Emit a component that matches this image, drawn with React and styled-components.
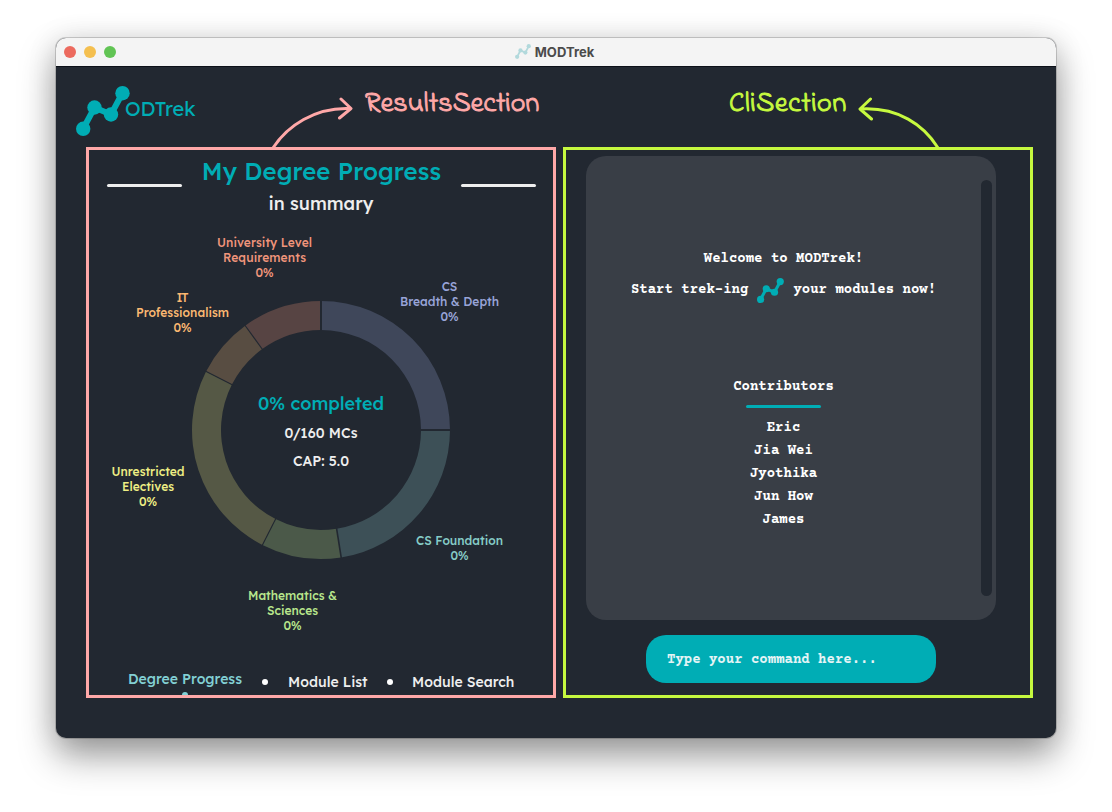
import React from "react";
import styled, { createGlobalStyle } from "styled-components";

const c = {
  ink: "#222831",
  panel: "#393e46",
  teal: "#00adb5",
  light: "#eeeeee",
  pink: "#ffa8a8",
  lime: "#c6f93f",
};

const GlobalStyle = createGlobalStyle`
  * { box-sizing: border-box; }
  body {
    margin: 0;
    background: #fff;
    font-family: Lexend, "Lexend Deca", Inter, "Liberation Sans", sans-serif;
    overflow: hidden;
  }
`;

const Page = styled.div`
  width: 1112px;
  height: 812px;
  padding: 38px 56px 74px;
`;

const Window = styled.div`
  width: 1000px;
  height: 700px;
  border-radius: 10px;
  background: ${c.ink};
  box-shadow: 0 0 0 1px rgba(0, 0, 0, 0.17), 0 18px 36px rgba(0, 0, 0, 0.38),
    0 2px 30px rgba(0, 0, 0, 0.12);
`;

const TitleBar = styled.div`
  height: 29px;
  padding: 0 8px;
  border-radius: 10px 10px 0 0;
  border-bottom: 1px solid #0c1018;
  background: #f4f4f4;
  display: grid;
  grid-template-columns: 100px 1fr 100px;
  align-items: center;
`;

const Lights = styled.div`
  display: flex;
  gap: 8px;
`;

const Light = styled.span`
  width: 12px;
  height: 12px;
  border-radius: 50%;
  background: ${(p) => p.$color};
`;

const WindowTitle = styled.div`
  display: flex;
  justify-content: center;
  align-items: center;
  gap: 4px;
  padding: 0 3px 1px 0;
  font-family: Inter, "Liberation Sans", sans-serif;
  font-size: 13px;
  line-height: 16px;
  font-weight: 700;
  letter-spacing: 0.05px;
  color: #4b4b4b;
`;

const Header = styled.header`
  height: 80px;
  padding-left: 20px;
  display: flex;
  align-items: flex-start;
`;

const LogoMark = styled.svg`
  flex: none;
  margin-top: ${(p) => p.$top || 0}px;
`;

const Wordmark = styled.div`
  flex: none;
  width: 146px;
  margin: 30px 0 0 -5px;
  font-size: 20px;
  line-height: 24px;
  letter-spacing: ${(p) => p.$spacing}px;
  color: ${c.teal};
`;

const Arrow = styled.svg`
  flex: none;
  margin-top: 28px;
  fill: none;
  stroke: ${(p) => p.$color};
  stroke-width: 3;
  stroke-linecap: round;
  stroke-linejoin: round;
`;

const Callout = styled.div`
  flex: none;
  width: ${(p) => p.$width}px;
  margin: 21px 0 0 ${(p) => p.$left}px;
  font-family: "Indie Flower", "Gloria Hallelujah", "Comic Neue", "Patrick Hand", Lato, sans-serif;
  font-size: 28px;
  line-height: 34px;
  letter-spacing: ${(p) => p.$spacing}px;
  white-space: nowrap;
  -webkit-text-stroke: 1px ${(p) => p.$color};
  color: ${(p) => p.$color};
`;

const Sections = styled.main`
  display: flex;
  gap: 7px;
  padding-left: 30px;
`;

const Section = styled.section`
  width: 470px;
  height: 551px;
  border: 3px solid ${(p) => p.$color};
  overflow: hidden;
  display: flex;
  flex-direction: column;
`;

const TitleRow = styled.div`
  display: flex;
  justify-content: space-between;
  align-items: flex-start;
  height: 40px;
  padding: 5px 17px 0 18px;
`;

const Rule = styled.span`
  display: block;
  width: 75px;
  height: 3px;
  border-radius: 2px;
  background: ${(p) => p.$color || c.light};
  margin-top: ${(p) => p.$top || 0}px;
`;

const Title = styled.h1`
  margin: 0;
  font-size: 24px;
  line-height: 33px;
  font-weight: 500;
  letter-spacing: 0.1px;
  white-space: nowrap;
  color: ${c.teal};
`;

const Subtitle = styled.h2`
  margin: 0;
  height: 35px;
  text-align: center;
  font-size: 18px;
  line-height: 28px;
  font-weight: 500;
  letter-spacing: 0;
  color: ${c.light};
`;

const Chart = styled.svg`
  display: block;
  flex: none;
  font-weight: 500;
  text-anchor: middle;
`;

const Nav = styled.nav`
  display: flex;
  align-items: flex-start;
  padding: 12px 0 0 39px;
  white-space: nowrap;
`;

const NavItem = styled.div`
  position: relative;
  width: ${(p) => p.$width}px;
  margin-top: ${(p) => (p.$active ? 0 : 3)}px;
  font-size: 14px;
  line-height: 20px;
  font-weight: 500;
  letter-spacing: ${(p) => p.$spacing}px;
  color: ${(p) => (p.$active ? "#82d0d4" : c.light)};
`;

const Dot = styled.span`
  width: 6px;
  height: 6px;
  border-radius: 50%;
  background: #fff;
  margin: 10px ${(p) => p.$right}px 0 ${(p) => p.$left}px;
`;

const ActiveDot = styled.span`
  position: absolute;
  left: 54px;
  top: 23px;
  width: 6px;
  height: 6px;
  border-radius: 50%;
  background: #82d0d4;
`;

const Console = styled.div`
  width: 410px;
  height: 464px;
  margin: 6px 0 0 20px;
  padding: 24px 4px 24px 0;
  border-radius: 20px;
  background: ${c.panel};
  display: flex;
  font-family: "Courier Prime", "Liberation Mono", monospace;
  font-size: 14px;
  font-weight: 700;
  color: #fff;
`;

const Output = styled.div`
  width: 395px;
  padding-top: 66px;
  display: flex;
  flex-direction: column;
  align-items: center;
`;

const Line = styled.div`
  height: ${(p) => p.$height || 23}px;
  display: flex;
  align-items: center;
  white-space: pre;
  gap: 9px;
`;

const Credits = styled.div`
  margin-top: 70px;
  display: flex;
  flex-direction: column;
  align-items: center;
`;

const ScrollTrack = styled.div`
  width: 11px;
  border-radius: 6px;
  background: ${c.ink};
`;

const CommandBox = styled.div`
  width: 290px;
  height: 48px;
  margin: 15px 0 0 80px;
  padding-left: 21px;
  border-radius: 20px;
  background: ${c.teal};
  color: #e4f4f5;
  font-family: "Courier Prime", "Liberation Mono", monospace;
  font-size: 14px;
  font-weight: 700;
  line-height: 51px;
`;

function Trek({ width, height, top, color = c.teal }) {
  return (
    <LogoMark width={width} height={height} $top={top} viewBox="0 0 54 50" fill={color} stroke={color}>
      <path d="M7 43 18.5 21.5 35 28.5 46.5 7" fill="none" strokeWidth="6" />
      <g stroke="none">
        <circle cx="7.2" cy="42.8" r="7.2" />
        <circle cx="18.5" cy="21.5" r="7.2" />
        <circle cx="35" cy="28.5" r="7.2" />
        <circle cx="46.5" cy="7.2" r="7.2" />
      </g>
    </LogoMark>
  );
}

const CX = 232;
const CY = 205;

const segments = [
  { from: 0, to: 90, fill: "#3f475a" },
  { from: 90, to: 171, fill: "#3d5057" },
  { from: 171, to: 207, fill: "#4b5949" },
  { from: 207, to: 297, fill: "#555845" },
  { from: 297, to: 324, fill: "#584d42" },
  { from: 324, to: 360, fill: "#574443" },
];

const dividers = [
  { at: 0, width: 2 },
  { at: 90, width: 2 },
  { at: 171, width: 1.6 },
  { at: 207, width: 1.1 },
  { at: 297, width: 1.1 },
  { at: 324, width: 1.1 },
];

const labels = [
  { x: 175.5, y: 21.5, color: "#f0957b", lines: [["University Level", 95], ["Requirements", 83], ["0%", 18]] },
  { x: 360.5, y: 66, color: "#98a4d8", lines: [["CS", 15.5], ["Breadth & Depth", 99], ["0%", 18]] },
  { x: 93.5, y: 76.5, color: "#fbb871", lines: [["IT", 12], ["Professionalism", 93], ["0%", 18]] },
  { x: 59, y: 250.5, color: "#eeee84", lines: [["Unrestricted", 73], ["Electives", 52], ["0%", 18]] },
  { x: 370.5, y: 320, color: "#86ccc7", lines: [["CS Foundation", 87], ["0%", 18]] },
  { x: 203.5, y: 374.5, color: "#b8e68c", lines: [["Mathematics &", 89], ["Sciences", 51], ["0%", 18]] },
];

const polar = (deg, r) => {
  const a = ((deg - 90) * Math.PI) / 180;
  return `${(CX + r * Math.cos(a)).toFixed(2)} ${(CY + r * Math.sin(a)).toFixed(2)}`;
};

const ring = (from, to, outer = 129, inner = 100) =>
  `M${polar(from, outer)}A${outer} ${outer} 0 0 1 ${polar(to, outer)}L${polar(to, inner)}A${inner} ${inner} 0 0 0 ${polar(from, inner)}Z`;

function DegreeChart() {
  return (
    <Chart width="464" height="432" viewBox="0 0 464 432">
      {segments.map((s) => (
        <path key={s.from} d={ring(s.from, s.to)} fill={s.fill} />
      ))}
      {dividers.map((d) => (
        <path key={d.at} d={`M${polar(d.at, 98)}L${polar(d.at, 131)}`} stroke={c.ink} strokeWidth={d.width} />
      ))}
      {labels.map((l) => (
        <g key={l.lines[0][0]} fill={l.color} fontSize="12">
          {l.lines.map(([text, width], i) => (
            <text key={text} x={l.x} y={l.y + i * 15} textLength={width}>
              {text}
            </text>
          ))}
        </g>
      ))}
      <text x="232" y="185" fontSize="18" fill={c.teal} textLength="126">0% completed</text>
      <text x="232" y="213" fontSize="14" fill={c.light} textLength="73">0/160 MCs</text>
      <text x="232" y="240.5" fontSize="14" fill={c.light} textLength="56">CAP: 5.0</text>
    </Chart>
  );
}

const contributors = ["Eric", "Jia Wei", "Jyothika", "Jun How", "James"];

export default function App() {
  return (
    <Page>
      <GlobalStyle />
      <Window>
        <TitleBar>
          <Lights>
            <Light $color="#ec6a5e" />
            <Light $color="#f4bf4f" />
            <Light $color="#61c454" />
          </Lights>
          <WindowTitle>
            <Trek width={16} height={15} color="#b2d9dc" />
            MODTrek
          </WindowTitle>
        </TitleBar>
        <Header>
          <Trek width={54} height={50} top={19} />
          <Wordmark $spacing={-0.1}>ODTrek</Wordmark>
          <Arrow $color={c.pink} width="84" height="52" viewBox="0 0 84 52">
            <path d="M2 53C16 31 44 12 79 13.5M70 4 80 13.5 68.5 23" />
          </Arrow>
          <Callout $color={c.pink} $width={176} $left={10} $spacing={0.15}>ResultsSection</Callout>
          <Callout $color={c.lime} $width={119} $left={188} $spacing={0.7}>CliSection</Callout>
          <Arrow $color={c.lime} width="94" height="52" viewBox="0 0 94 52">
            <path d="M90 53C76 30 50 12 13 14M22.5 4 12 14 23.5 24" />
          </Arrow>
        </Header>
        <Sections>
          <Section $color={c.pink}>
            <TitleRow>
              <Rule $top={29} />
              <Title>My Degree Progress</Title>
              <Rule $top={29} />
            </TitleRow>
            <Subtitle>in summary</Subtitle>
            <DegreeChart />
            <Nav>
              <NavItem $active $width={115} $spacing={0}>
                Degree Progress
                <ActiveDot />
              </NavItem>
              <Dot $left={19} $right={20} />
              <NavItem $width={79} $spacing={0}>Module List</NavItem>
              <Dot $left={20} $right={19} />
              <NavItem $width={103} $spacing={0}>Module Search</NavItem>
            </Nav>
          </Section>
          <Section $color={c.lime}>
            <Console>
              <Output>
                <Line $height={25}>Welcome to MODTrek!</Line>
                <Line $height={38}>
                  <span>Start trek-ing</span>
                  <Trek width={27} height={25} />
                  <span>your modules now!</span>
                </Line>
                <Credits>
                  <Line $height={16}>Contributors</Line>
                  <Rule $color={c.teal} $top={9.5} />
                  <Line $height={8.5} />
                  {contributors.map((name) => (
                    <Line key={name}>{name}</Line>
                  ))}
                </Credits>
              </Output>
              <ScrollTrack />
            </Console>
            <CommandBox>Type your command here...</CommandBox>
          </Section>
        </Sections>
      </Window>
    </Page>
  );
}
